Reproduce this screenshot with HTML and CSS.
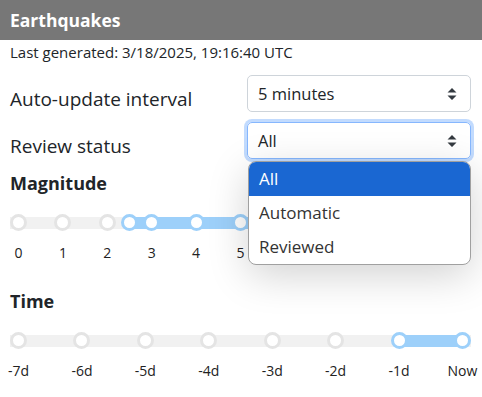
FILE: index.html
```html
<!DOCTYPE html>
<html lang="en">
<head>
  <meta charset="UTF-8">
  <title>Earthquakes</title>
  <link rel="stylesheet" href="styles.css">
</head>
<body>
  <div class="header">Earthquakes</div>

  <div class="content">
    <div class="meta">Last generated: 3/18/2025, 19:16:40 UTC</div>

    <div class="form-row">
      <label class="row-label">Auto-update interval</label>
      <div class="select">
        <span>5 minutes</span>
        <svg class="arrows" width="10" height="14" viewBox="0 0 10 14"><path d="M5 1L9.5 5.5H0.5Z M5 13L9.5 8.5H0.5Z" fill="#343a40"/></svg>
      </div>
    </div>

    <div class="form-row">
      <label class="row-label">Review status</label>
      <div class="select focused">
        <span>All</span>
        <svg class="arrows" width="10" height="14" viewBox="0 0 10 14"><path d="M5 1L9.5 5.5H0.5Z M5 13L9.5 8.5H0.5Z" fill="#343a40"/></svg>
        <ul class="dropdown">
          <li class="active">All</li>
          <li>Automatic</li>
          <li>Reviewed</li>
        </ul>
      </div>
    </div>

    <h2 class="section">Magnitude</h2>
    <div class="slider">
      <div class="track"></div>
      <div class="range" style="--from: 0.25; --to: 1"></div>
      <div class="ticks">
        <span class="tick"></span><span class="tick"></span><span class="tick"></span>
        <span class="tick on"></span><span class="tick on"></span><span class="tick on"></span>
        <span class="tick on"></span><span class="tick on"></span><span class="tick on"></span>
        <span class="tick on"></span><span class="tick on"></span>
      </div>
      <span class="handle" style="--p: 0.25"></span>
      <span class="handle" style="--p: 1"></span>
    </div>
    <div class="tick-labels">
      <span>0</span><span>1</span><span>2</span><span>3</span><span>4</span><span>5</span>
      <span>6</span><span>7</span><span>8</span><span>9</span><span>10</span>
    </div>

    <h2 class="section time">Time</h2>
    <div class="slider">
      <div class="track"></div>
      <div class="range" style="--from: 0.857143; --to: 1"></div>
      <div class="ticks">
        <span class="tick"></span><span class="tick"></span><span class="tick"></span>
        <span class="tick"></span><span class="tick"></span><span class="tick"></span>
        <span class="tick on"></span><span class="tick on"></span>
      </div>
    </div>
    <div class="tick-labels">
      <span>-7d</span><span>-6d</span><span>-5d</span><span>-4d</span>
      <span>-3d</span><span>-2d</span><span>-1d</span><span>Now</span>
    </div>
  </div>
</body>
</html>
```

FILE: styles.css
```css
body {
  margin: 0;
  font-family: "Open Sans", "Noto Sans", sans-serif;
  color: #212529;
  background: #fff;
}
.header {
  height: 40px;
  line-height: 40px;
  padding: 0 10px;
  background-color: #777;
  color: #fff;
  font-weight: bold;
  font-size: 17.5px;
}
.content {
  padding: 0 11px 0 10px;
}
.meta {
  margin-top: 2px;
  line-height: 20px;
  font-size: 15px;
}
.form-row {
  display: grid;
  grid-template-columns: 1fr 224px;
  margin-top: 13px;
}
.form-row + .form-row {
  margin-top: 10px;
}
.row-label {
  font-size: 19px;
  line-height: 24px;
  padding-top: 12px;
}
.select {
  position: relative;
  height: 37px;
  box-sizing: border-box;
  border: 1px solid #ced4da;
  border-radius: 5px;
  padding: 0 10px;
  display: flex;
  align-items: center;
  justify-content: space-between;
  font-size: 16.5px;
}
.select.focused {
  border-color: #86b7fe;
  box-shadow: 0 0 0 3px rgba(13, 110, 253, 0.25);
}
.arrows {
  margin-right: 3px;
}
.dropdown {
  position: absolute;
  top: 38px;
  left: 0;
  width: 221px;
  margin: 0;
  padding: 0;
  list-style: none;
  background: #fff;
  border: 1px solid #a0a0a0;
  border-radius: 8px;
  overflow: hidden;
  box-shadow: 0 10px 40px rgba(0, 0, 0, 0.18);
  z-index: 10;
}
.dropdown li {
  height: 34px;
  line-height: 34px;
  padding: 0 10px;
  font-size: 17px;
  color: #333;
}
.dropdown li.active {
  background: #1a67d2;
  color: #fff;
}
.section {
  margin: 12px 0 0;
  font-size: 18px;
  line-height: 24px;
  font-weight: bold;
}
.section.time {
  margin-top: 26px;
}
.slider {
  position: relative;
  height: 17px;
  margin-top: 19px;
}
.track,
.range {
  position: absolute;
  top: 2.5px;
  height: 12px;
  background: #f1f1f1;
}
.track {
  left: 0;
  right: 0;
}
.range {
  background: #9dd0fa;
  left: calc(8.5px + (100% - 17px) * var(--from));
  right: calc(8.5px + (100% - 17px) * (1 - var(--to)));
}
.ticks {
  position: relative;
  display: flex;
  justify-content: space-between;
}
.tick,
.handle {
  width: 17px;
  height: 17px;
  box-sizing: border-box;
  border-radius: 50%;
  border: 3px solid #e4e4e4;
  background: #fff;
}
.tick.on,
.handle {
  border-color: #9dd0fa;
}
.handle {
  position: absolute;
  top: 0;
  left: calc((100% - 17px) * var(--p));
}
.tick-labels {
  display: flex;
  justify-content: space-between;
  margin-top: 12px;
  line-height: 20px;
  font-size: 14px;
  color: #222;
}
.tick-labels span {
  width: 17px;
  display: flex;
  justify-content: center;
  white-space: nowrap;
}
```
